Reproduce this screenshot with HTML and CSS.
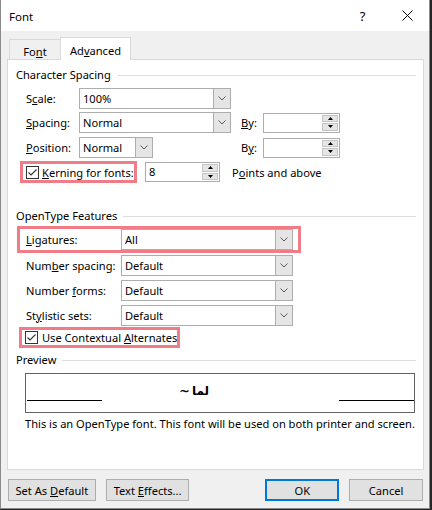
FILE: index.html
```html
<!DOCTYPE html>
<html>
<head>
<meta charset="utf-8">
<link rel="stylesheet" href="styles.css">
</head>
<body>
<div class="window">
  <div class="titlebar">
    <span class="title">Font</span>
    <span class="cap-btn help">?</span>
    <span class="cap-btn close"><svg width="11" height="11" viewBox="0 0 11 11"><path d="M0.5 0.5L10.5 10.5M10.5 0.5L0.5 10.5" stroke="#000" stroke-width="1" fill="none"/></svg></span>
  </div>
  <div class="client">
    <div class="tabs">
      <div class="tab tab-font"><span>Fo<u>n</u>t</span></div>
      <div class="tab active"><span>Ad<u>v</u>anced</span></div>
    </div>
    <div class="panel">
      <div class="ghead"><span>Character Spacing</span><span class="rule"></span></div>

      <div class="row r-scale">
        <span class="lbl l53">S<u>c</u>ale:</span>
        <div class="sel w152"><span class="val">100%</span><span class="drop"><svg width="8" height="5" viewBox="0 0 8 5"><path d="M0.5 0.5L4 4L7.5 0.5" fill="none" stroke="#5a5a5a"/></svg></span></div>
      </div>

      <div class="row r-spacing">
        <span class="lbl l53"><u>S</u>pacing:</span>
        <div class="selcell"><div class="sel w152"><span class="val">Normal</span><span class="drop"><svg width="8" height="5" viewBox="0 0 8 5"><path d="M0.5 0.5L4 4L7.5 0.5" fill="none" stroke="#5a5a5a"/></svg></span></div></div>
        <span class="by"><u>B</u>y:</span>
        <div class="spin-input w77"><span class="val"></span><span class="spin"><span class="sb"><svg width="5" height="3" viewBox="0 0 5 3"><path d="M0 3L2.5 0L5 3Z" fill="#000"/></svg></span><span class="sb"><svg width="5" height="3" viewBox="0 0 5 3"><path d="M0 0L2.5 3L5 0Z" fill="#000"/></svg></span></span></div>
      </div>

      <div class="row r-position">
        <span class="lbl l53"><u>P</u>osition:</span>
        <div class="selcell"><div class="sel w74"><span class="val">Normal</span><span class="drop"><svg width="8" height="5" viewBox="0 0 8 5"><path d="M0.5 0.5L4 4L7.5 0.5" fill="none" stroke="#5a5a5a"/></svg></span></div></div>
        <span class="by">B<u>y</u>:</span>
        <div class="spin-input w77"><span class="val"></span><span class="spin"><span class="sb"><svg width="5" height="3" viewBox="0 0 5 3"><path d="M0 3L2.5 0L5 3Z" fill="#000"/></svg></span><span class="sb"><svg width="5" height="3" viewBox="0 0 5 3"><path d="M0 0L2.5 3L5 0Z" fill="#000"/></svg></span></span></div>
      </div>

      <div class="row r-kern">
        <div class="redbox kernbox">
          <span class="cb"><svg width="11" height="11" viewBox="0 0 11 11"><path d="M1.5 5.5L4 8L9.5 2.5" fill="none" stroke="#333" stroke-width="1.1"/></svg></span>
          <span class="cblbl"><u>K</u>erning for fonts:</span>
        </div>
        <div class="spin-input w75 kern-input"><span class="val">8</span><span class="spin"><span class="sb"><svg width="5" height="3" viewBox="0 0 5 3"><path d="M0 3L2.5 0L5 3Z" fill="#000"/></svg></span><span class="sb"><svg width="5" height="3" viewBox="0 0 5 3"><path d="M0 0L2.5 3L5 0Z" fill="#000"/></svg></span></span></div>
        <span class="points">P<u>o</u>ints and above</span>
      </div>

      <div class="ghead ot-head"><span>OpenType Features</span><span class="rule"></span></div>

      <div class="row r-lig">
        <div class="redbox ligbox">
          <span class="lbl l95"><u>L</u>igatures:</span>
          <div class="sel w172"><span class="val">All</span><span class="drop"><svg width="8" height="5" viewBox="0 0 8 5"><path d="M0.5 0.5L4 4L7.5 0.5" fill="none" stroke="#5a5a5a"/></svg></span></div>
        </div>
      </div>

      <div class="row r-ot r-numsp">
        <span class="lbl l95">Num<u>b</u>er spacing:</span>
        <div class="sel w172"><span class="val">Default</span><span class="drop"><svg width="8" height="5" viewBox="0 0 8 5"><path d="M0.5 0.5L4 4L7.5 0.5" fill="none" stroke="#5a5a5a"/></svg></span></div>
      </div>

      <div class="row r-ot">
        <span class="lbl l95">Number <u>f</u>orms:</span>
        <div class="sel w172"><span class="val">Default</span><span class="drop"><svg width="8" height="5" viewBox="0 0 8 5"><path d="M0.5 0.5L4 4L7.5 0.5" fill="none" stroke="#5a5a5a"/></svg></span></div>
      </div>

      <div class="row r-ot">
        <span class="lbl l95">St<u>y</u>listic sets:</span>
        <div class="sel w172"><span class="val">Default</span><span class="drop"><svg width="8" height="5" viewBox="0 0 8 5"><path d="M0.5 0.5L4 4L7.5 0.5" fill="none" stroke="#5a5a5a"/></svg></span></div>
      </div>

      <div class="row r-ctx">
        <div class="redbox ctxbox">
          <span class="cb"><svg width="11" height="11" viewBox="0 0 11 11"><path d="M1.5 5.5L4 8L9.5 2.5" fill="none" stroke="#333" stroke-width="1.1"/></svg></span>
          <span class="cblbl ctxlbl">Use Contextual <u>A</u>lternates</span>
        </div>
      </div>

      <div class="ghead pv-head"><span>Preview</span><span class="rule"></span></div>

      <div class="preview">
        <span class="pline"></span>
        <span class="sample"><span class="tilde">~</span><bdi class="ar">لما</bdi></span>
        <span class="pline right"></span>
      </div>

      <div class="desc">This is an OpenType font. This font will be used on both printer and screen.</div>
    </div>

    <div class="buttons">
      <span class="btn b-default"><span>Set As <u>D</u>efault</span></span>
      <span class="btn b-effects"><span>Text <u>E</u>ffects...</span></span>
      <span class="btn b-ok"><span>OK</span></span>
      <span class="btn b-cancel"><span>Cancel</span></span>
    </div>
  </div>
</div>
</body>
</html>
```

FILE: styles.css
```css
* { box-sizing: border-box; }

body {
  margin: 0;
  background: #262626;
  font-family: "Noto Sans", sans-serif;
  font-size: 11.1px;
  color: #000;
}

u { text-underline-offset: 1px; text-decoration-thickness: 1px; }

.window {
  width: 430px;
  height: 509px;
  background: #f0f0f0;
  border: 1px solid #8a8a8a;
  border-top: 0;
  display: flex;
  flex-direction: column;
}

.titlebar {
  height: 31px;
  background: #fff;
  display: flex;
  align-items: center;
}

.title {
  margin-left: 8px;
  font-size: 11.5px;
  padding-top: 1px;
}

.cap-btn {
  width: 46px;
  height: 31px;
  display: flex;
  align-items: center;
  justify-content: center;
}

.help {
  margin-left: auto;
  font-size: 13px;
  padding-left: 5px;
}

.close { padding-left: 2px; }

.client {
  padding: 6px 6px 0 6px;
  display: flex;
  flex-direction: column;
}

.tabs {
  display: flex;
  align-items: flex-end;
  height: 23px;
  margin-left: 2px;
}

.tab {
  height: 21px;
  border: 1px solid #d9d9d9;
  border-bottom: 0;
  background: #f0f0f0;
  display: flex;
  align-items: center;
  justify-content: center;
  padding-top: 2px;
}

.tab-font { width: 51px; border-right: 0; }

.tab.active {
  width: 71px;
  height: 23px;
  background: #fff;
  position: relative;
  z-index: 1;
  padding-top: 3px;
}

.panel {
  margin-top: -1px;
  width: 417px;
  height: 411px;
  border: 1px solid #d9d9d9;
  background: #fff;
  display: flex;
  flex-direction: column;
}

.ghead {
  display: flex;
  align-items: center;
  height: 16px;
  line-height: 16px;
  margin: 7px 7px 0 8px;
}

.ghead .rule {
  flex: 1;
  height: 1px;
  background: #dcdcdc;
  margin-left: 7px;
}

.ot-head { margin-top: 25px; }
.ot-head .rule { margin-left: 6px; }
.pv-head { margin-top: 4px; }
.pv-head .rule { margin-left: 6px; }

.row {
  display: flex;
  align-items: center;
  margin-left: 18px;
}

.lbl { white-space: nowrap; }
.l53 { width: 53px; }
.l95 { width: 95px; }

.sel {
  height: 21px;
  border: 1px solid #adadad;
  background: #fff;
  display: flex;
}

.sel .val {
  flex: 1;
  padding-left: 3px;
  line-height: 19px;
}

.sel .drop {
  width: 17px;
  background: #e5e5e5;
  border-left: 1px solid #adadad;
  display: flex;
  align-items: center;
  justify-content: center;
}

.w152 { width: 152px; }
.w74 { width: 74px; }
.w172 { width: 172px; }
.w77 { width: 77px; }
.w75 { width: 75px; }

.selcell { width: 152px; }

.by { margin-left: 10px; width: 22px; }

.spin-input {
  height: 20px;
  border: 1px solid #adadad;
  background: #fff;
  display: flex;
}

.spin-input .val {
  flex: 1;
  padding-left: 3px;
  line-height: 18px;
}

.spin {
  width: 17px;
  display: flex;
  flex-direction: column;
  padding: 1px 1px 1px 0;
  gap: 1px;
}

.sb {
  flex: 1;
  background: #e5e5e5;
  border: 1px solid #c4c4c4;
  display: flex;
  align-items: center;
  justify-content: center;
}

.r-scale { margin-top: 5px; }
.r-spacing { margin-top: 3px; }
.r-position { margin-top: 4px; }

.redbox {
  border: 3px solid #ef7c86;
  display: flex;
  align-items: center;
}

.r-kern { margin-top: 3px; margin-left: 12px; }

.kernbox {
  width: 117px;
  height: 22px;
  padding-left: 3px;
}

.cb {
  width: 13px;
  height: 13px;
  border: 1px solid #333;
  background: #fff;
  display: flex;
  align-items: center;
  justify-content: center;
  flex: none;
}

.cblbl { margin-left: 3px; white-space: nowrap; }

.kern-input { margin-left: 8px; }
.points { margin-left: 12px; }

.r-lig { margin-top: 2px; margin-left: 9px; }

.ligbox {
  width: 284px;
  height: 27px;
  padding-left: 6px;
}

.r-ot { height: 21px; }
.r-ot + .r-ot { margin-top: 4px; }
.r-numsp.r-ot { margin-top: 2px; }

.r-ctx { margin-top: 1px; margin-left: 11px; }

.ctxbox {
  width: 161px;
  height: 21px;
  padding-left: 3px;
}

.ctxlbl { margin-left: 4px; }

.preview {
  margin: 5px 0 0 17px;
  width: 390px;
  height: 40px;
  border: 1px solid #646464;
  display: flex;
  align-items: flex-end;
  padding-bottom: 11px;
}

.pline {
  width: 75px;
  height: 1px;
  background: #000;
  margin-left: 1px;
}

.pline.right { margin-left: auto; margin-right: 0; }

.sample {
  margin-left: 77px;
  margin-bottom: 3px;
  display: flex;
  align-items: center;
  font-family: "DejaVu Sans", sans-serif;
  font-weight: bold;
  font-size: 13px;
  line-height: 14px;
}

.tilde { font-size: 13px; margin-right: 2px; }
.ar { font-size: 12px; }

.desc {
  margin: 3px 0 0 17px;
  line-height: 16px;
  white-space: nowrap;
}

.buttons {
  margin-top: 9px;
  margin-left: 1px;
  display: flex;
  height: 22px;
}

.btn {
  height: 22px;
  background: #e1e1e1;
  border: 1px solid #adadad;
  display: flex;
  align-items: center;
  justify-content: center;
  white-space: nowrap;
}

.b-default { width: 88px; }
.b-effects { width: 84px; margin-left: 10px; }
.b-ok { width: 74px; margin-left: 76px; border: 2px solid #0078d7; }
.b-cancel { width: 74px; margin-left: 10px; }
```
